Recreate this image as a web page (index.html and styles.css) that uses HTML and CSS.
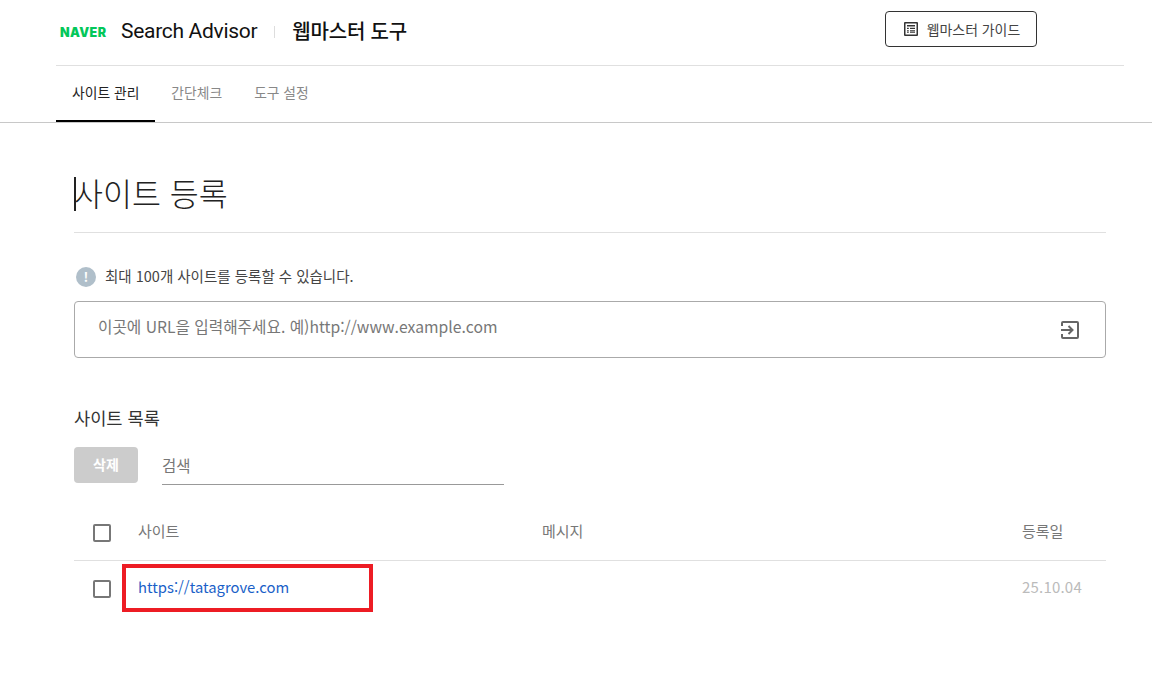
FILE: index.html
```html
<!DOCTYPE html>
<html lang="ko">
<head>
    <meta charset="UTF-8">
    <meta name="viewport" content="width=device-width, initial-scale=1.0">
    <title>네이버 서치어드바이저 웹마스터 도구</title>
    <link rel="stylesheet" href="styles.css">
</head>
<body>

    <header class="header">
        <div class="top-bar">
            <div class="brand">
                <span class="naver">NAVER</span>
                <span class="product">Search Advisor</span>
                <span class="brand-sep"></span>
                <span class="tool-name">웹마스터 도구</span>
            </div>
            <button class="guide-button">
                <svg class="guide-icon" width="14" height="14" viewBox="0 0 14 14">
                    <path fill="#333" fill-rule="evenodd" d="M1 0h12a1 1 0 0 1 1 1v12a1 1 0 0 1-1 1H1a1 1 0 0 1-1-1V1a1 1 0 0 1 1-1zm.5 1.500v11h11v-11zM3 3h8v1.500H3zm0 2.700h1.800v1.300H3zm3 0h5v1.300H6zM3 8.300h1.800v1.300H3zm3 0h5v1.300H6zM3 10.200h1.800v.8H3zm3 0h5v.8H6z"/>
                </svg>
                웹마스터 가이드
            </button>
        </div>
        <nav class="tabs">
            <a class="tab active">사이트 관리</a>
            <a class="tab">간단체크</a>
            <a class="tab">도구 설정</a>
        </nav>
    </header>

    <main class="content">
        <h1 class="page-title"><span class="caret"></span>사이트 등록</h1>

        <p class="notice">
            <span class="notice-icon">!</span>
            최대 100개 사이트를 등록할 수 있습니다.
        </p>

        <div class="url-box">
            <span class="url-placeholder">이곳에 URL을 입력해주세요. 예)http://www.example.com</span>
            <svg width="18" height="18" viewBox="0 0 18 18">
                <path fill="none" stroke="#666" stroke-width="2" d="M1 5V2a1 1 0 0 1 1-1h14a1 1 0 0 1 1 1v14a1 1 0 0 1-1 1H2a1 1 0 0 1-1-1v-3"/>
                <path fill="none" stroke="#666" stroke-width="2" d="M0 9h11M7.500 5l4 4-4 4"/>
            </svg>
        </div>

        <h2 class="list-title">사이트 목록</h2>

        <div class="toolbar">
            <button class="delete-button">삭제</button>
            <div class="search">검색</div>
        </div>

        <div class="row row-head">
            <span class="checkbox"></span>
            <span class="col-site">사이트</span>
            <span class="col-message">메시지</span>
            <span class="col-date">등록일</span>
        </div>
        <div class="row row-site">
            <span class="checkbox"></span>
            <a class="col-site site-link">https://tatagrove.com</a>
            <span class="col-message"></span>
            <span class="col-date date-value">25.10.04</span>
            <span class="highlight"></span>
        </div>
    </main>

</body>
</html>
```

FILE: styles.css
```css
* {
    margin: 0;
    padding: 0;
    box-sizing: border-box;
}
html, body {
    background-color: #fff;
    color: #333;
    font-family: "Noto Sans CJK KR", "Noto Sans", sans-serif;
}
.header {
    border-bottom: 1px solid #c8c8c8;
}
.top-bar {
    height: 66px;
    margin: 0 28px 0 56px;
    padding: 0 87px 4px 4px;
    display: flex;
    justify-content: space-between;
    align-items: center;
    border-bottom: 1px solid #e0e0e0;
}
.brand {
    display: flex;
    align-items: center;
}
.naver {
    width: 50px;
    margin-top: 3px;
    font-family: Inter, "Liberation Sans", sans-serif;
    font-size: 12.5px;
    font-weight: 900;
    letter-spacing: 0.4px;
    color: #03c75a;
}
.product {
    margin-left: 11px;
    font-family: Roboto, "Noto Sans", sans-serif;
    font-size: 21px;
    letter-spacing: -0.3px;
    color: #111;
}
.brand-sep {
    width: 1px;
    height: 12px;
    margin: 2px 17px 0;
    background-color: #ddd;
}
.tool-name {
    font-size: 20px;
    font-weight: 500;
    letter-spacing: -0.2px;
    color: #111;
}
.guide-button {
    width: 152px;
    height: 36px;
    margin-top: -3px;
    padding-left: 2px;
    display: flex;
    align-items: center;
    justify-content: center;
    gap: 9px;
    background-color: #fff;
    border: 1px solid #333;
    border-radius: 4px;
    color: #444;
    font-family: inherit;
    font-size: 13.9px;
}
.tabs {
    height: 56px;
    margin-left: 56px;
    display: flex;
}
.tab {
    padding: 0 16px 5px;
    display: flex;
    align-items: center;
    font-size: 13.8px;
    color: #888;
}
.tab.active {
    padding-bottom: 3px;
    border-bottom: 2px solid #000;
    color: #222;
}
.content {
    margin: 0 46px 0 74px;
}
.page-title {
    position: relative;
    height: 110px;
    padding-top: 46px;
    border-bottom: 1px solid #e0e0e0;
    font-size: 31.5px;
    font-weight: 300;
    line-height: 46px;
    color: #222;
}
.caret {
    position: absolute;
    left: 0;
    top: 54px;
    width: 2px;
    height: 34px;
    background-color: #222;
}
.notice {
    height: 68px;
    padding-top: 32px;
    display: flex;
    align-items: flex-start;
    font-size: 14.5px;
    line-height: 22px;
    color: #444;
}
.notice-icon {
    width: 20px;
    height: 20px;
    margin: 2px 9px 0 2px;
    border-radius: 50%;
    background-color: #b0bfca;
    color: #fff;
    font-size: 13px;
    font-weight: 700;
    line-height: 20px;
    text-align: center;
}
.url-box {
    height: 57px;
    padding: 0 26px 0 23px;
    display: flex;
    align-items: center;
    justify-content: space-between;
    border: 1px solid #aaa;
    border-radius: 4px;
}
.url-placeholder {
    margin-top: -6px;
    font-size: 15.7px;
    color: #777;
}
.list-title {
    margin-top: 47px;
    font-size: 17.6px;
    font-weight: 400;
    line-height: 26px;
    color: #333;
}
.toolbar {
    margin-top: 16px;
    display: flex;
}
.delete-button {
    width: 64px;
    height: 36px;
    padding-bottom: 2px;
    background-color: #ccc;
    border: none;
    border-radius: 4px;
    color: #fff;
    font-family: inherit;
    font-size: 14px;
    font-weight: 700;
}
.search {
    width: 342px;
    height: 38px;
    margin-left: 24px;
    border-bottom: 1px solid #999;
    font-size: 15.5px;
    line-height: 36px;
    color: #777;
}
.row {
    position: relative;
    display: flex;
    align-items: center;
    padding-left: 19px;
    font-size: 15px;
}
.row-head {
    height: 56px;
    margin-top: 20px;
    border-bottom: 1px solid #e0e0e0;
    color: #777;
}
.row-site {
    height: 56px;
}
.checkbox {
    width: 18px;
    height: 18px;
    border: 2px solid #777;
    border-radius: 2px;
}
.col-site {
    width: 404px;
    margin-left: 27px;
}
.col-message {
    flex: 1;
}
.col-date {
    width: 84px;
}
.row-head .col-site, .row-head .col-message, .row-head .col-date {
    margin-top: -5px;
}
.site-link {
    margin-top: -6px;
    font-size: 14.8px;
    color: #1a5fc8;
}
.date-value {
    margin-top: -5px;
    color: #bbb;
    letter-spacing: 0.2px;
}
.highlight {
    position: absolute;
    left: 48px;
    top: 3px;
    width: 251px;
    height: 48px;
    border: 4px solid #ed1c24;
}
```
